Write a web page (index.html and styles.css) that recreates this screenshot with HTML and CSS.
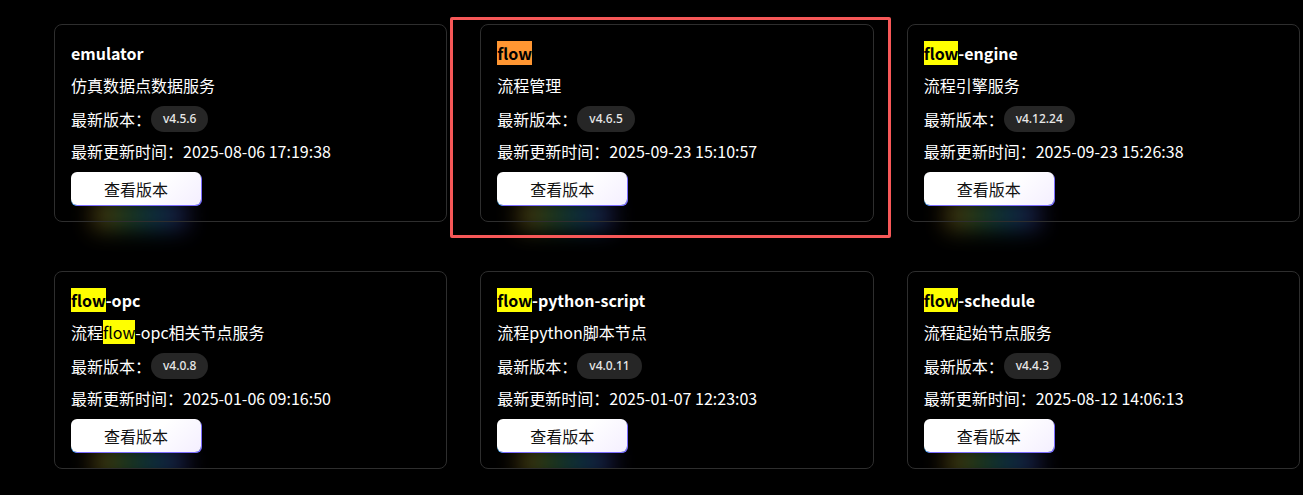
FILE: index.html
```html
<!DOCTYPE html>
<html lang="zh-CN">
  <head>
    <meta charset="UTF-8" />
    <meta name="viewport" content="width=device-width, initial-scale=1.0" />
    <title>服务列表</title>
    <link rel="stylesheet" href="styles.css">
  </head>
  <body>
    <div class="grid">
      <div class="card">
        <div class="card-title">emulator</div>
        <div class="card-desc">仿真数据点数据服务</div>
        <div class="card-row">最新版本：<span class="tag">v4.5.6</span></div>
        <div class="card-time">最新更新时间：2025-08-06 17:19:38</div>
        <button class="btn">查看版本</button>
      </div>

      <div class="card">
        <div class="card-title"><mark class="current">flow</mark></div>
        <div class="card-desc">流程管理</div>
        <div class="card-row">最新版本：<span class="tag">v4.6.5</span></div>
        <div class="card-time">最新更新时间：2025-09-23 15:10:57</div>
        <button class="btn">查看版本</button>
        <div class="focus-box"></div>
      </div>

      <div class="card">
        <div class="card-title"><mark>flow</mark>-engine</div>
        <div class="card-desc">流程引擎服务</div>
        <div class="card-row">最新版本：<span class="tag">v4.12.24</span></div>
        <div class="card-time">最新更新时间：2025-09-23 15:26:38</div>
        <button class="btn">查看版本</button>
      </div>

      <div class="card">
        <div class="card-title"><mark>flow</mark>-opc</div>
        <div class="card-desc">流程<mark>flow</mark>-opc相关节点服务</div>
        <div class="card-row">最新版本：<span class="tag">v4.0.8</span></div>
        <div class="card-time">最新更新时间：2025-01-06 09:16:50</div>
        <button class="btn">查看版本</button>
      </div>

      <div class="card">
        <div class="card-title"><mark>flow</mark>-python-script</div>
        <div class="card-desc">流程python脚本节点</div>
        <div class="card-row">最新版本：<span class="tag">v4.0.11</span></div>
        <div class="card-time">最新更新时间：2025-01-07 12:23:03</div>
        <button class="btn">查看版本</button>
      </div>

      <div class="card">
        <div class="card-title"><mark>flow</mark>-schedule</div>
        <div class="card-desc">流程起始节点服务</div>
        <div class="card-row">最新版本：<span class="tag">v4.4.3</span></div>
        <div class="card-time">最新更新时间：2025-08-12 14:06:13</div>
        <button class="btn">查看版本</button>
      </div>
    </div>
  </body>
</html>
```

FILE: styles.css
```css
body {
  font-family: "Noto Sans CJK SC", "Noto Sans", sans-serif;
  background: #000;
  color: #fff;
  margin: 0;
  padding: 0;
}
.grid {
  display: grid;
  grid-template-columns: repeat(3, 1fr);
  column-gap: 33px;
  row-gap: 49px;
  width: 1246px;
  padding: 24px 0 0 54px;
}
.card {
  position: relative;
  border: 1px solid #2e2e2e;
  border-radius: 8px;
  padding: 15px 16px 16px;
  font-size: 16px;
}
.card-title {
  margin-top: 1px;
  font-weight: 700;
  line-height: 24px;
  height: 24px;
}
.card-desc {
  margin-top: 8px;
  line-height: 24px;
}
.card-row {
  margin-top: 9px;
  display: flex;
  align-items: center;
  height: 26px;
}
.card-time {
  margin-top: 7px;
  line-height: 24px;
}
mark {
  background: #ffff00;
  color: #000;
}
mark.current {
  background: #ff9632;
}
.tag {
  display: inline-block;
  height: 26px;
  line-height: 26px;
  padding: 0 12px;
  border-radius: 13px;
  background: #262626;
  color: #e8e8e8;
  font-size: 12px;
  font-family: "Noto Sans", sans-serif;
  font-weight: 500;
}
.btn {
  position: relative;
  display: block;
  margin-top: 9px;
  width: 130px;
  height: 33px;
  border: none;
  border-radius: 6px;
  background: linear-gradient(135deg, #fff 60%, #f4efff);
  box-shadow: 1px 1px 0 #7b6cff, 0 1px 0 #3fb4ff;
  color: #111;
  font-family: inherit;
  font-size: 16px;
  cursor: pointer;
}
.btn::after {
  content: "";
  position: absolute;
  left: 22px;
  right: 14px;
  top: 28px;
  height: 30px;
  background: linear-gradient(90deg, #7a5512, #2f5a2a, #124a66, #2a2266);
  filter: blur(11px);
  opacity: 0.7;
  z-index: -1;
}
.focus-box {
  position: absolute;
  left: -31px;
  top: -8px;
  right: -18px;
  bottom: -17px;
  border: 3px solid #f75858;
  border-radius: 2px;
  pointer-events: none;
}
```
